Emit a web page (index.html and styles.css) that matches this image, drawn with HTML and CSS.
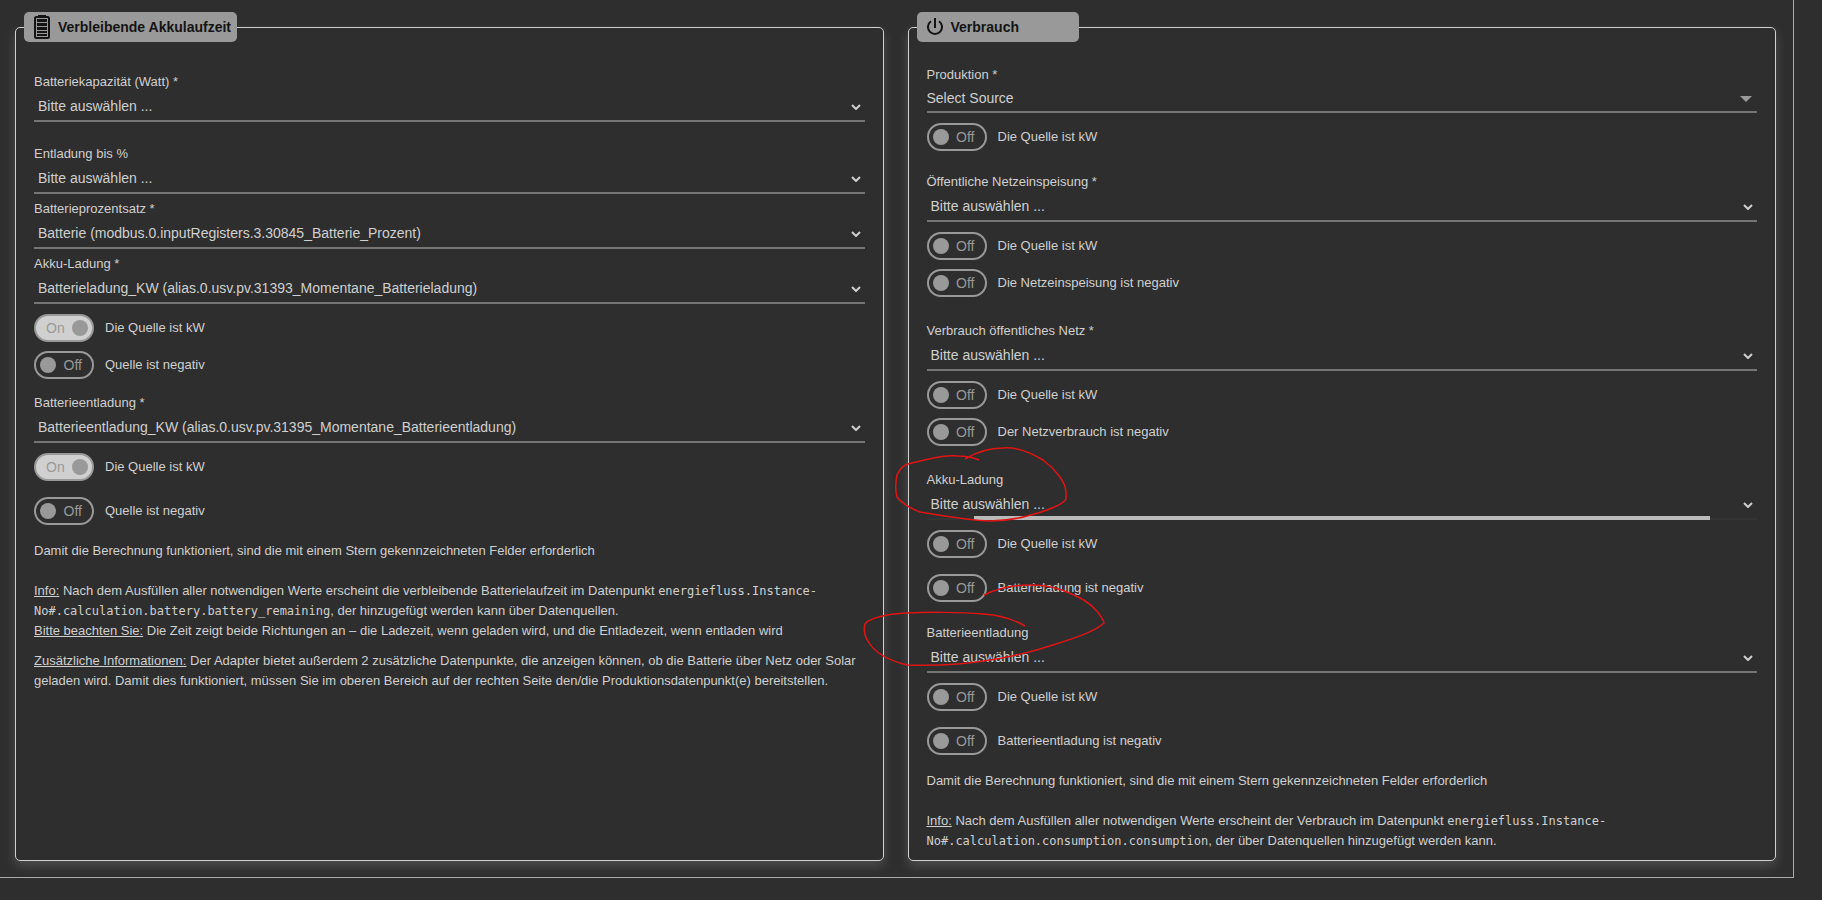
FILE: index.html
```html
<!DOCTYPE html>
<html lang="de">
<head>
<meta charset="utf-8">
<title>Berechnung</title>
<link rel="stylesheet" href="styles.css">
</head>
<body>
<main class="frame">
  <fieldset class="panel">
    <legend class="title">
      <svg class="title-icon" viewBox="0 0 16 24" aria-hidden="true"><path d="M4 0h8v2H4z" fill="#141414"/><rect x="1" y="2" width="14" height="21" rx="1.500" fill="none" stroke="#141414" stroke-width="2"/><path d="M3 4h10v3H3zM3 8h10v3H3zM3 12h10v3H3zM3 16h10v2H3zM3 19h10v2H3z" fill="#141414"/></svg>
      Verbleibende Akkulaufzeit
    </legend>
    <div class="body body-battery">
      <div class="field">
        <label for="capacity">Batteriekapazität (Watt) *</label>
        <div class="control"><select id="capacity"><option>Bitte auswählen ...</option></select><svg class="chevron" viewBox="0 0 10 6" aria-hidden="true"><path d="M1 1l4 4 4-4"/></svg></div>
      </div>
      <div class="field spaced">
        <label for="discharge">Entladung bis %</label>
        <div class="control"><select id="discharge"><option>Bitte auswählen ...</option></select><svg class="chevron" viewBox="0 0 10 6" aria-hidden="true"><path d="M1 1l4 4 4-4"/></svg></div>
      </div>
      <div class="field">
        <label for="percent">Batterieprozentsatz *</label>
        <div class="control"><select id="percent"><option>Batterie (modbus.0.inputRegisters.3.30845_Batterie_Prozent)</option></select><svg class="chevron" viewBox="0 0 10 6" aria-hidden="true"><path d="M1 1l4 4 4-4"/></svg></div>
      </div>
      <div class="field">
        <label for="charge">Akku-Ladung *</label>
        <div class="control"><select id="charge"><option>Batterieladung_KW (alias.0.usv.pv.31393_Momentane_Batterieladung)</option></select><svg class="chevron" viewBox="0 0 10 6" aria-hidden="true"><path d="M1 1l4 4 4-4"/></svg></div>
      </div>
      <div class="switches tight">
        <label class="switch"><input type="checkbox" checked><span class="track on">On<span class="knob"></span></span>Die Quelle ist kW</label>
        <label class="switch"><input type="checkbox"><span class="track"><span class="knob"></span>Off</span>Quelle ist negativ</label>
      </div>
      <div class="field after-switch">
        <label for="unload">Batterieentladung *</label>
        <div class="control"><select id="unload"><option>Batterieentladung_KW (alias.0.usv.pv.31395_Momentane_Batterieentladung)</option></select><svg class="chevron" viewBox="0 0 10 6" aria-hidden="true"><path d="M1 1l4 4 4-4"/></svg></div>
      </div>
      <div class="switches">
        <label class="switch"><input type="checkbox" checked><span class="track on">On<span class="knob"></span></span>Die Quelle ist kW</label>
        <label class="switch"><input type="checkbox"><span class="track"><span class="knob"></span>Off</span>Quelle ist negativ</label>
      </div>
      <p class="required">Damit die Berechnung funktioniert, sind die mit einem Stern gekennzeichneten Felder erforderlich</p>
      <p class="info"><u>Info:</u> Nach dem Ausfüllen aller notwendigen Werte erscheint die verbleibende Batterielaufzeit im Datenpunkt <code>energiefluss.Instance-No#.calculation.battery.battery_remaining</code>, der hinzugefügt werden kann über Datenquellen.<br><u>Bitte beachten Sie:</u> Die Zeit zeigt beide Richtungen an – die Ladezeit, wenn geladen wird, und die Entladezeit, wenn entladen wird</p>
      <p class="extra"><u>Zusätzliche Informationen:</u> Der Adapter bietet außerdem 2 zusätzliche Datenpunkte, die anzeigen können, ob die Batterie über Netz oder Solar geladen wird. Damit dies funktioniert, müssen Sie im oberen Bereich auf der rechten Seite den/die Produktionsdatenpunkt(e) bereitstellen.</p>
    </div>
  </fieldset>

  <fieldset class="panel">
    <legend class="title title-wide">
      <svg class="title-icon power" viewBox="0 0 16 18" aria-hidden="true"><path d="M8 0v10M4 3.200a7 7 0 1 0 8 0" fill="none" stroke="#141414" stroke-width="2"/></svg>
      Verbrauch
    </legend>
    <div class="body">
      <div class="field">
        <label for="production">Produktion *</label>
        <div class="control multi"><select id="production"><option>Select Source</option></select><svg class="caret" viewBox="0 0 12 6" aria-hidden="true"><path d="M0 0h12L6 6z"/></svg></div>
      </div>
      <div class="switches">
        <label class="switch"><input type="checkbox"><span class="track"><span class="knob"></span>Off</span>Die Quelle ist kW</label>
      </div>
      <div class="field section">
        <label for="feedin">Öffentliche Netzeinspeisung *</label>
        <div class="control"><select id="feedin"><option>Bitte auswählen ...</option></select><svg class="chevron" viewBox="0 0 10 6" aria-hidden="true"><path d="M1 1l4 4 4-4"/></svg></div>
      </div>
      <div class="switches tight">
        <label class="switch"><input type="checkbox"><span class="track"><span class="knob"></span>Off</span>Die Quelle ist kW</label>
        <label class="switch"><input type="checkbox"><span class="track"><span class="knob"></span>Off</span>Die Netzeinspeisung ist negativ</label>
      </div>
      <div class="field section-wide">
        <label for="grid">Verbrauch öffentliches Netz *</label>
        <div class="control"><select id="grid"><option>Bitte auswählen ...</option></select><svg class="chevron" viewBox="0 0 10 6" aria-hidden="true"><path d="M1 1l4 4 4-4"/></svg></div>
      </div>
      <div class="switches tight">
        <label class="switch"><input type="checkbox"><span class="track"><span class="knob"></span>Off</span>Die Quelle ist kW</label>
        <label class="switch"><input type="checkbox"><span class="track"><span class="knob"></span>Off</span>Der Netzverbrauch ist negativ</label>
      </div>
      <div class="field section-wide marked">
        <label for="charge2">Akku-Ladung</label>
        <div class="control active"><select id="charge2"><option>Bitte auswählen ...</option></select><svg class="chevron" viewBox="0 0 10 6" aria-hidden="true"><path d="M1 1l4 4 4-4"/></svg></div>
        <svg class="marks" viewBox="0 0 260 240" aria-hidden="true">
          <path d="M105 19Q123 8 143 8C153 7 166 10 183 20C194 28 206 42 206 52V59C204 64 187 71 167 76C152 80 140 81 130 81C115 81 84 76 60 72Q44 66 37 57C35 50 36 40 37 35Q41 26 48 24L60 21C76 17 88 15 98 16Q110 16 119 20"/>
          <path d="M124 155Q145 145 170 145C194 145 208 152 220 158C234 165 243 178 244 183C236 191 215 198 193 205C175 211 150 217 130 220C100 225 72 226 47 225C27 220 14 212 8 201C4 195 4 188 5 184C8 179 24 174 47 173C64 172 100 172 123 174Q149 176 165 186"/>
        </svg>
      </div>
      <div class="switches">
        <label class="switch"><input type="checkbox"><span class="track"><span class="knob"></span>Off</span>Die Quelle ist kW</label>
        <label class="switch"><input type="checkbox"><span class="track"><span class="knob"></span>Off</span>Batterieladung ist negativ</label>
      </div>
      <div class="field section">
        <label for="unload2">Batterieentladung</label>
        <div class="control"><select id="unload2"><option>Bitte auswählen ...</option></select><svg class="chevron" viewBox="0 0 10 6" aria-hidden="true"><path d="M1 1l4 4 4-4"/></svg></div>
      </div>
      <div class="switches">
        <label class="switch"><input type="checkbox"><span class="track"><span class="knob"></span>Off</span>Die Quelle ist kW</label>
        <label class="switch"><input type="checkbox"><span class="track"><span class="knob"></span>Off</span>Batterieentladung ist negativ</label>
      </div>
      <p class="required">Damit die Berechnung funktioniert, sind die mit einem Stern gekennzeichneten Felder erforderlich</p>
      <p class="info"><u>Info:</u> Nach dem Ausfüllen aller notwendigen Werte erscheint der Verbrauch im Datenpunkt <code>energiefluss.Instance-No#.calculation.consumption.consumption</code>, der über Datenquellen hinzugefügt werden kann.</p>
    </div>
  </fieldset>
</main>
</body>
</html>
```
FILE: styles.css
```css
* { box-sizing: border-box; }

body {
  margin: 0;
  background: #2e2e2e;
  color: #d0d0d0;
  font: 13px/20px "Liberation Sans", Arial, sans-serif;
}

.frame {
  display: grid;
  grid-template-columns: 1fr 1fr;
  gap: 24px;
  margin-right: 28px;
  padding: 12px 17px 16px 15px;
  border: solid #aaa;
  border-width: 0 1px 1px 0;
}

.panel {
  min-width: 0;
  margin: 0;
  padding: 0 8px 9px;
  border: 1px solid #d0d0d0;
  border-radius: 5px;
  box-shadow: 0 5px 12px rgba(255, 255, 255, 0.16);
}

.title {
  display: flex;
  align-items: center;
  gap: 8px;
  height: 30px;
  padding: 0 6px 0 10px;
  border-radius: 5px;
  background: #999;
  color: #141414;
  font-size: 14px;
  font-weight: bold;
}

.title-wide { width: 162px; }
.title-icon { width: 16px; height: 24px; }
.title-icon.power { height: 18px; }

.body { padding: 22px 10px 0; }
.body-battery { padding-top: 29px; }

.field > label { display: block; height: 20px; line-height: 22px; }
.field + .field { margin-top: 4px; }
.field + .spaced { margin-top: 21px; }
.after-switch { margin-top: 13px; }
.section { margin-top: 20px; }
.section-wide { margin-top: 23px; }

.control {
  position: relative;
  border-bottom: 2px solid #757575;
}

.control select {
  display: block;
  width: 100%;
  height: 29px;
  padding: 0 24px 0 4px;
  border: 0;
  outline: 0;
  appearance: none;
  background: none;
  color: #d0d0d0;
  font: 14px "Liberation Sans", Arial, sans-serif;
}

.control.multi select { height: 27px; padding-left: 0; }

.control.active { border-color: #343434; }
.control.active::after {
  content: "";
  position: absolute;
  right: 47px;
  bottom: -2px;
  left: 47px;
  height: 4px;
  background: #bbb;
}

.chevron {
  position: absolute;
  top: 13px;
  right: 4px;
  width: 10px;
  height: 6px;
  fill: none;
  stroke: #d0d0d0;
  stroke-width: 2;
}

.caret {
  position: absolute;
  top: 12px;
  right: 5px;
  width: 12px;
  height: 6px;
  fill: #999;
}

.switches {
  display: flex;
  flex-direction: column;
  align-items: flex-start;
  gap: 16px;
  margin-top: 10px;
}

.switches.tight { gap: 9px; }

.switch {
  position: relative;
  display: flex;
  align-items: center;
  gap: 11px;
}

.switch input {
  position: absolute;
  width: 60px;
  height: 28px;
  margin: 0;
  opacity: 0;
}

.track {
  display: flex;
  align-items: center;
  justify-content: space-between;
  width: 60px;
  height: 28px;
  padding: 0 10px 0 4px;
  border: 2px solid #999;
  border-radius: 14px;
  color: #999;
  font-size: 14px;
}

.track.on { padding: 0 4px 0 10px; background: #d0d0d0; }

.knob {
  width: 16px;
  height: 16px;
  border-radius: 50%;
  background: #999;
}

p { margin: 0; }
.required { margin-top: 16px; }
.info { margin-top: 20px; }
.extra { margin-top: 10px; }
code { font: 12px "DejaVu Sans Mono", monospace; }

.marked { position: relative; }

.marks {
  position: absolute;
  top: -29px;
  left: -67px;
  z-index: 1;
  width: 260px;
  height: 240px;
  fill: none;
  stroke: #e11414;
  stroke-width: 1.5;
  pointer-events: none;
}
```
